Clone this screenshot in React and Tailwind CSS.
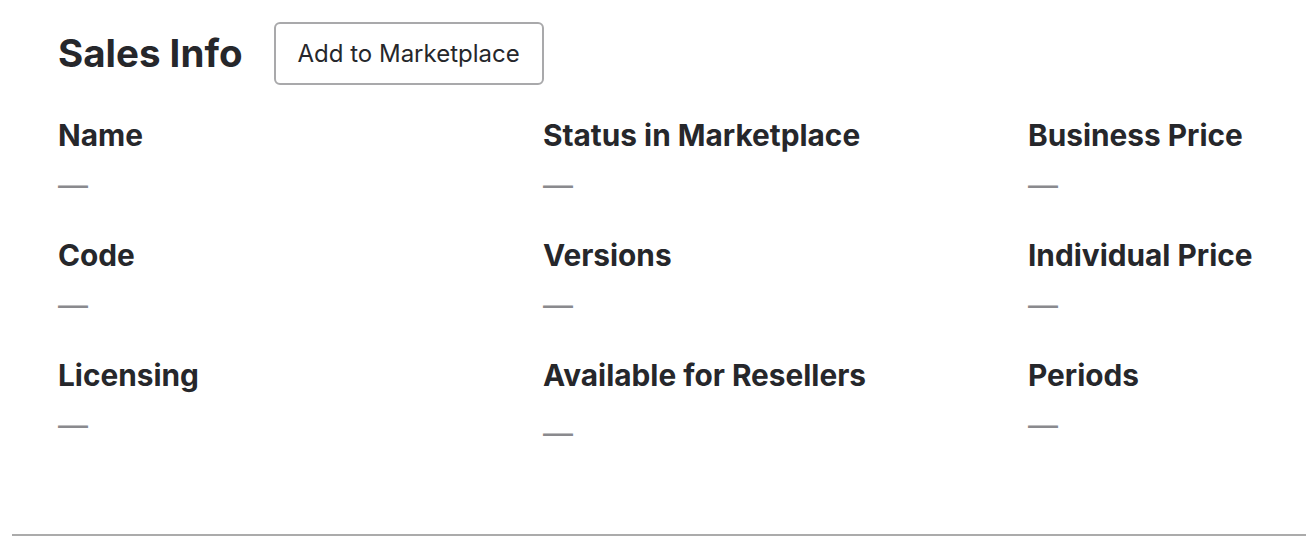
import React from "react";

const fields = [
    { label: "Name" },
    { label: "Status in Marketplace" },
    { label: "Business Price" },
    { label: "Code" },
    { label: "Versions" },
    { label: "Individual Price" },
    { label: "Licensing" },
    { label: "Available for Resellers", lower: true },
    { label: "Periods" },
];

export default function App() {
    return (
        <div className="w-[1306px] h-[540px] bg-white flex flex-col overflow-hidden font-['Inter',sans-serif] text-[#26272b]">
            <div className="px-[58px] pt-[22px]">
                {/* header */}
                <div className="flex items-center gap-[31px]">
                    <h1 className="text-[38.5px] font-bold leading-none">Sales Info</h1>
                    <button className="h-[63px] px-[22px] border-2 border-[#a9a9ab] rounded-[6px] text-[24px] text-[#26272b] bg-white">
                        Add to Marketplace
                    </button>
                </div>

                {/* fields */}
                <div className="grid grid-cols-[485px_485px_1fr] mt-[30px]">
                    {fields.map((f) => (
                        <div key={f.label} className="h-[120px]">
                            <div className="text-[29.8px] font-bold leading-[40px] whitespace-nowrap">{f.label}</div>
                            <div className={`text-[30px] leading-none text-[#8a8a8e] ${f.lower ? "mt-[23px]" : "mt-[15px]"}`}>—</div>
                        </div>
                    ))}
                </div>
            </div>
            <div className="flex-1" />
            <div className="ml-[12px] h-[2px] bg-[#ababab] mb-[4px]" />
        </div>
    );
}
